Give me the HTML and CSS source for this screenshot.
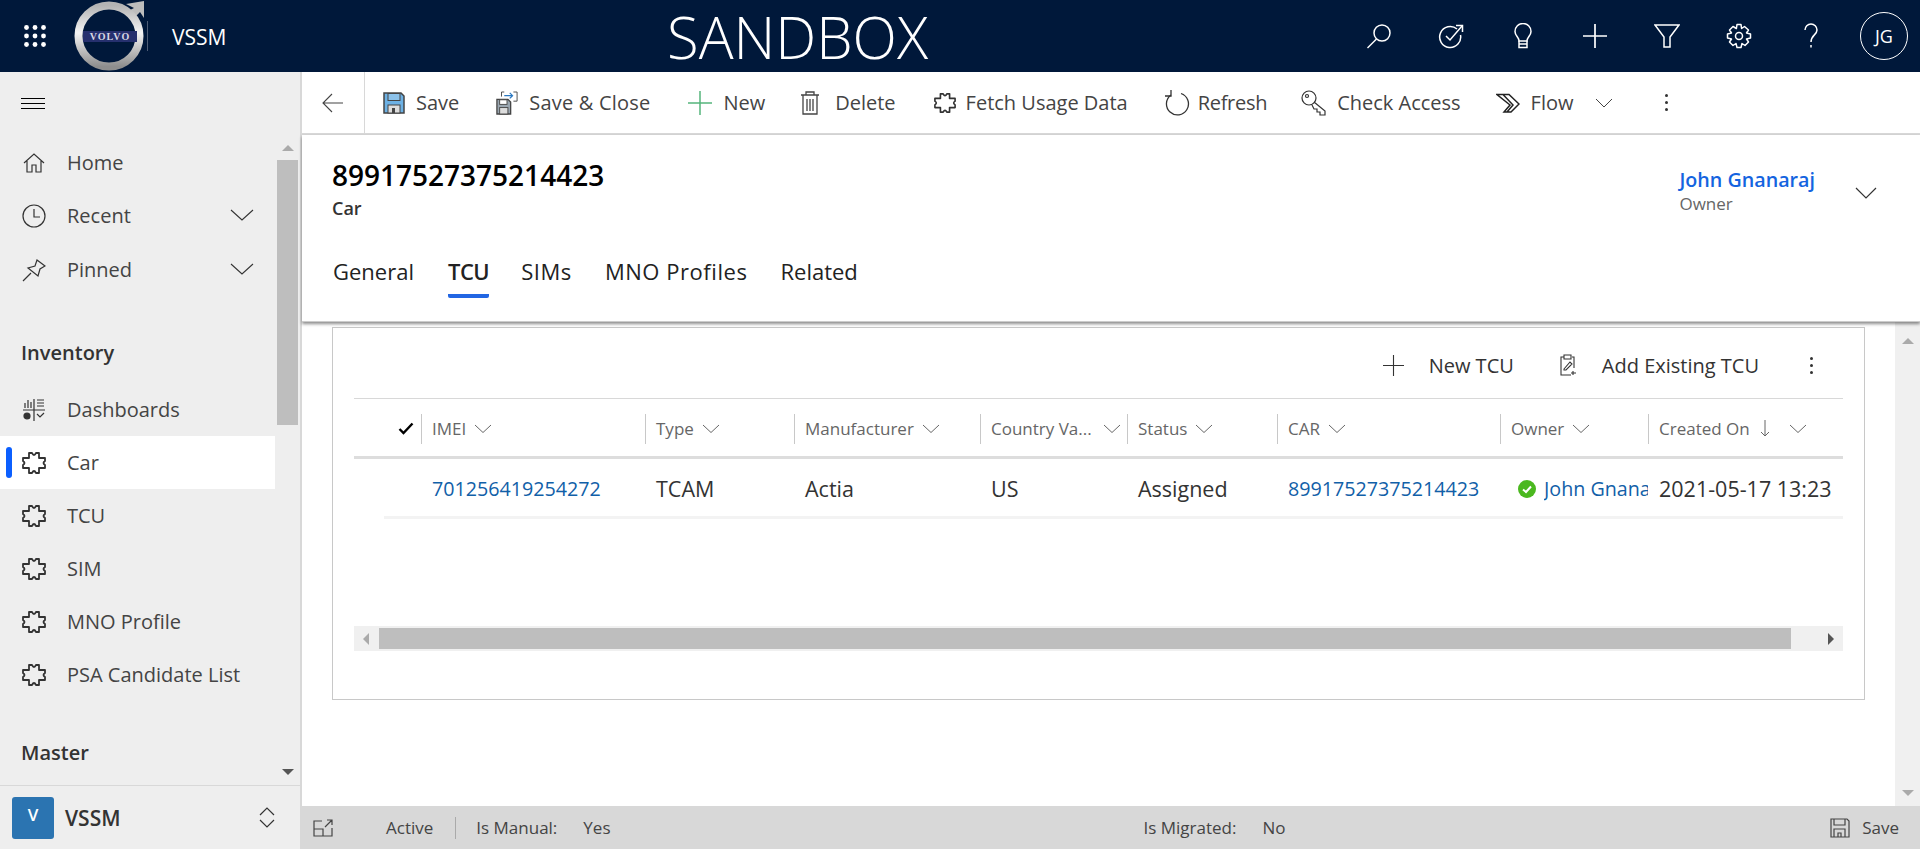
FILE: index.html
```html
<!DOCTYPE html>
<html>
<head>
  <title>VSSM - Car</title>
  <link rel="stylesheet" href="styles.css">
</head>
<body>
  <header class="topbar">
    <svg class="waffle" width="22" height="22" viewBox="0 0 22 22" fill="#fff"><circle cx="2.500" cy="2.500" r="2.400"/><circle cx="11" cy="2.500" r="2.400"/><circle cx="19.500" cy="2.500" r="2.400"/><circle cx="2.500" cy="11" r="2.400"/><circle cx="11" cy="11" r="2.400"/><circle cx="19.500" cy="11" r="2.400"/><circle cx="2.500" cy="19.500" r="2.400"/><circle cx="11" cy="19.500" r="2.400"/><circle cx="19.500" cy="19.500" r="2.400"/></svg>
    <div class="logo">
      <svg width="72" height="72" viewBox="0 0 72 72">
        <defs>
          <linearGradient id="chrome" x1="0" y1="0" x2="0" y2="1"><stop offset="0" stop-color="#b4b4b4"/><stop offset="0.45" stop-color="#f4f4f4"/><stop offset="1" stop-color="#8e8e8e"/></linearGradient>
        </defs>
        <path d="M52 4 L70 1 L70 18 L66 12 L60 18 L54 11 L60 8 Z" fill="#bdbdbd"/>
        <circle cx="35" cy="36" r="30.500" fill="#00183a" stroke="url(#chrome)" stroke-width="8"/>
        <rect x="9" y="31" width="54" height="11" fill="#26306e"/>
      </svg>
      <span class="logo-word">VOLVO</span>
    </div>
    <div class="app-name">VSSM</div>
    <div class="sandbox">SANDBOX</div>
    <div class="top-icons">
      <svg width="26" height="26" viewBox="0 0 26 26" fill="none" stroke="#fff" stroke-width="1.500"><circle cx="16" cy="10" r="8"/><path d="M10.500 16 L1.500 25"/></svg>
      <svg width="26" height="26" viewBox="0 0 26 26" fill="none" stroke="#fff" stroke-width="1.500"><path d="M19 6 A10.500 10.500 0 1 0 22.500 12"/><path d="M8 13 L12 17 L24 3"/><path d="M18 2.500 H24.500 V9"/></svg>
      <svg width="26" height="26" viewBox="0 0 26 26" fill="none" stroke="#fff" stroke-width="1.500"><path d="M9 18 C9 14 5 13 5 8.500 A8 8 0 0 1 21 8.500 C21 13 17 14 17 18 Z"/><path d="M9 18 V24.500 H17 V18 M9 21 H17"/></svg>
      <svg width="26" height="26" viewBox="0 0 26 26" fill="none" stroke="#fff" stroke-width="1.700"><path d="M13 1 V25 M1 13 H25"/></svg>
      <svg width="26" height="26" viewBox="0 0 26 26" fill="none" stroke="#fff" stroke-width="1.500"><path d="M1 2 H25 L16 14 V24 H10 V14 Z"/></svg>
      <svg width="26" height="26" viewBox="0 0 26 26" fill="none" stroke="#fff" stroke-width="1.500"><circle cx="13" cy="13" r="3.500"/><path d="M11 1.500 H15 L15.600 5.500 L18.500 3.500 L22.500 7 L20.500 10 L24.500 11 V15 L20.500 16 L22.500 19 L19 22.500 L16 20.500 L15 24.500 H11 L10 20.500 L7 22.500 L3.500 19 L5.500 16 L1.500 15 V11 L5.500 10 L3.500 7 L7 3.500 L10.400 5.500 Z" stroke-linejoin="round"/></svg>
      <svg width="26" height="26" viewBox="0 0 26 26" fill="none" stroke="#fff" stroke-width="1.500"><path d="M7 7 A6 6 0 0 1 19 7 C19 12 13 12 13 19"/><path d="M13 22 V24.500"/></svg>
      <div class="avatar">JG</div>
    </div>
  </header>

  <div class="main">
    <nav class="sidebar">
      <div class="side-scroll">
        <div class="side-list">
          <div class="burger"><span></span><span></span><span></span></div>
          <div class="side-item"><svg class="side-icon" width="24" height="24" viewBox="0 0 24 24" fill="none" stroke="#333" stroke-width="1.200"><path d="M2 12 L12 3 L22 12 M5 10 V21 H10 V14 H14 V21 H19 V10"/></svg>Home</div>
          <div class="side-item"><svg class="side-icon" width="24" height="24" viewBox="0 0 24 24" fill="none" stroke="#333" stroke-width="1.200"><circle cx="12" cy="12" r="11"/><path d="M12 5 V13 H18"/></svg>Recent<svg class="side-chevron" width="24" height="12" viewBox="0 0 24 12" fill="none" stroke="#333" stroke-width="1.100"><path d="M1 1 L12 11 L23 1"/></svg></div>
          <div class="side-item side-pinned"><svg class="side-icon" width="24" height="24" viewBox="0 0 24 24" fill="none" stroke="#333" stroke-width="1.200"><path d="M1 23 L9 15 M15 2 L23 8 L18 11 L16 18 L6 10 L13 8 Z"/></svg>Pinned<svg class="side-chevron" width="24" height="12" viewBox="0 0 24 12" fill="none" stroke="#333" stroke-width="1.100"><path d="M1 1 L12 11 L23 1"/></svg></div>
          <div class="side-heading side-heading-first">Inventory</div>
          <div class="side-item"><svg class="side-icon" width="24" height="24" viewBox="0 0 24 24" fill="none" stroke="#333" stroke-width="1.200"><path d="M1 12 H23 M12 1 V23 M3 10 V5 M6 10 V2 M9 10 V4 M15 2 H22 M15 5 H22 M15 8 H22 M15 16 L18 19 L22 15"/><circle cx="5" cy="18" r="3" fill="#333"/></svg>Dashboards</div>
          <div class="side-item side-active"><svg class="side-icon" width="24" height="24" viewBox="0 0 24 24"><use href="#puzzle"/></svg>Car</div>
          <div class="side-item"><svg class="side-icon" width="24" height="24" viewBox="0 0 24 24"><use href="#puzzle"/></svg>TCU</div>
          <div class="side-item"><svg class="side-icon" width="24" height="24" viewBox="0 0 24 24"><use href="#puzzle"/></svg>SIM</div>
          <div class="side-item"><svg class="side-icon" width="24" height="24" viewBox="0 0 24 24"><use href="#puzzle"/></svg>MNO Profile</div>
          <div class="side-item"><svg class="side-icon" width="24" height="24" viewBox="0 0 24 24"><use href="#puzzle"/></svg>PSA Candidate List</div>
          <div class="side-heading side-heading-last">Master</div>
        </div>
        <div class="side-bar">
          <span class="arrow-up"></span>
          <div class="side-thumb"></div>
          <span class="arrow-down"></span>
        </div>
      </div>
      <div class="area-switch">
        <div class="area-badge">V</div>
        <div class="area-name">VSSM</div>
        <svg width="16" height="21" viewBox="0 0 16 21" fill="none" stroke="#333" stroke-width="1.200"><path d="M1 8 L8 1 L15 8 M1 13 L8 20 L15 13"/></svg>
      </div>
    </nav>

    <div class="content">
      <div class="commandbar">
        <div class="back"><svg width="22" height="20" viewBox="0 0 22 20" fill="none" stroke="#444" stroke-width="1.100"><path d="M21 10 H1 M10 1 L1 10 L10 19"/></svg></div>
        <div class="cmd cmd-save">
          <svg width="22" height="22" viewBox="0 0 22 22"><path d="M1 1 H18 L21 4 V21 H1 Z" fill="#6db1e4" stroke="#444" stroke-width="1.500"/><rect x="5" y="1.500" width="12" height="7" fill="#8cc2ea" stroke="#444"/><rect x="5" y="13" width="12" height="8" fill="#ddd" stroke="#444"/><rect x="9" y="16" width="3" height="5" fill="#444"/></svg>
          Save
        </div>
        <div class="cmd cmd-close">
          <svg width="22" height="24" viewBox="0 0 24 26"><path d="M1 9 H13 L16 12 V25 H1 Z" fill="#9aa6b0" stroke="#444" stroke-width="1.400"/><rect x="4" y="9.500" width="8" height="5" fill="#fff" stroke="#444"/><rect x="4" y="18" width="9" height="7" fill="#ddd" stroke="#444"/><path d="M6 6 V1 H9 M19 1 H23 V11 H19" fill="none" stroke="#444"/><path d="M9 5 H18 M15 2 L18 5 L15 8" fill="none" stroke="#2b79c2" stroke-width="1.400"/></svg>
          Save &amp; Close
        </div>
        <div class="cmd cmd-new">
          <svg width="24" height="24" viewBox="0 0 24 24" fill="none" stroke="#55b57c" stroke-width="1.500"><path d="M12 0 V24 M0 12 H24"/></svg>
          New
        </div>
        <div class="cmd cmd-delete">
          <svg width="20" height="24" viewBox="0 0 18 24" fill="none" stroke="#444" stroke-width="1.300"><path d="M0 4 H18 M5 4 V1 H13 V4 M2 4 V23 H16 V4 M6 8 V20 M9 8 V20 M12 8 V20"/></svg>
          Delete
        </div>
        <div class="cmd cmd-fetch">
          <svg width="22" height="22" viewBox="0 0 24 24"><use href="#puzzle"/></svg>
          Fetch Usage Data
        </div>
        <div class="cmd cmd-refresh">
          <svg width="26" height="26" viewBox="0 0 26 26" fill="none" stroke="#333" stroke-width="1.300"><path d="M7 5 A11 11 0 1 0 17 3.500"/><path d="M7 0 V6 H1"/></svg>
          Refresh
        </div>
        <div class="cmd cmd-access">
          <svg width="26" height="26" viewBox="0 0 26 26" fill="none" stroke="#333" stroke-width="1.200"><circle cx="8" cy="8" r="7"/><circle cx="6" cy="6" r="1.500"/><path d="M13 12 L24 21 V25 H19 V22 H16 V19 H13 L11 15"/></svg>
          Check Access
        </div>
        <div class="cmd cmd-flow">
          <svg width="24" height="20" viewBox="0 0 24 20" fill="none" stroke="#222" stroke-width="1.500"><path d="M1 1.500 H13 L23 11 L15 19 H8 L14 12 Z M7 1.500 L17 12 L11 19"/></svg>
          Flow
          <svg class="flow-chevron" width="18" height="10" viewBox="0 0 18 10" fill="none" stroke="#444" stroke-width="1"><path d="M1 1 L9 9 L17 1"/></svg>
        </div>
        <div class="kebab"><span></span><span></span><span></span></div>
      </div>

      <div class="form-head">
        <div class="title-row">
          <div>
            <h1 class="record-title">89917527375214423</h1>
            <div class="record-type">Car</div>
          </div>
          <div class="owner-box">
            <div>
              <div class="owner-name">John Gnanaraj</div>
              <div class="owner-label">Owner</div>
            </div>
            <svg width="22" height="12" viewBox="0 0 22 12" fill="none" stroke="#333" stroke-width="1.200"><path d="M1 1 L11 11 L21 1"/></svg>
          </div>
        </div>
        <div class="tabs">
          <div class="tab">General</div>
          <div class="tab tab-on">TCU</div>
          <div class="tab tab-wide">SIMs</div>
          <div class="tab tab-wide">MNO Profiles</div>
          <div class="tab">Related</div>
        </div>
      </div>

      <div class="form-body">
        <div class="form-scroll">
          <section class="grid-card">
            <div class="grid-tools">
              <div class="grid-tool">
                <svg width="21" height="21" viewBox="0 0 21 21" fill="none" stroke="#333" stroke-width="1.100"><path d="M10.500 0 V21 M0 10.500 H21"/></svg>
                New TCU
              </div>
              <div class="grid-tool">
                <svg width="18" height="22" viewBox="0 0 18 22" fill="none" stroke="#333" stroke-width="1.100"><path d="M5 3 H2 V21 H12 M13 3 H15 V14 M5 1 H12 V5 H5 Z M5 15 L11 8 L13 10 L7 16 L5 16 Z M14 17 V21 M12 19 H17"/></svg>
                Add Existing TCU
              </div>
              <div class="kebab kebab-small"><span></span><span></span><span></span></div>
            </div>
            <div class="grid">
              <div class="grid-row grid-header">
                <div class="cell cell-check"><svg width="16" height="13" viewBox="0 0 16 13" fill="none" stroke="#000" stroke-width="2.400"><path d="M1.500 7 L5.500 11 L14.500 1.500"/></svg></div>
                <div class="cell cell-imei">IMEI<svg class="col-chevron" width="18" height="9" viewBox="0 0 18 9"><path d="M1 1 L9 8.500 L17 1"/></svg></div>
                <div class="cell cell-type">Type<svg class="col-chevron" width="18" height="9" viewBox="0 0 18 9"><path d="M1 1 L9 8.500 L17 1"/></svg></div>
                <div class="cell cell-maker">Manufacturer<svg class="col-chevron" width="18" height="9" viewBox="0 0 18 9"><path d="M1 1 L9 8.500 L17 1"/></svg></div>
                <div class="cell cell-country">Country Va...<svg class="col-chevron col-chevron-end" width="18" height="9" viewBox="0 0 18 9"><path d="M1 1 L9 8.500 L17 1"/></svg></div>
                <div class="cell cell-status">Status<svg class="col-chevron" width="18" height="9" viewBox="0 0 18 9"><path d="M1 1 L9 8.500 L17 1"/></svg></div>
                <div class="cell cell-car">CAR<svg class="col-chevron" width="18" height="9" viewBox="0 0 18 9"><path d="M1 1 L9 8.500 L17 1"/></svg></div>
                <div class="cell cell-owner">Owner<svg class="col-chevron" width="18" height="9" viewBox="0 0 18 9"><path d="M1 1 L9 8.500 L17 1"/></svg></div>
                <div class="cell cell-created">Created On<svg class="col-arrow" width="10" height="17" viewBox="0 0 10 17"><path d="M5 0 V16 M1 12 L5 16 L9 12"/></svg><svg class="col-chevron col-chevron-end" width="18" height="9" viewBox="0 0 18 9"><path d="M1 1 L9 8.500 L17 1"/></svg></div>
              </div>
              <div class="grid-row grid-data">
                <div class="cell cell-check"></div>
                <div class="cell cell-imei"><span class="link">701256419254272</span></div>
                <div class="cell cell-type">TCAM</div>
                <div class="cell cell-maker">Actia</div>
                <div class="cell cell-country">US</div>
                <div class="cell cell-status">Assigned</div>
                <div class="cell cell-car"><span class="link">89917527375214423</span></div>
                <div class="cell cell-owner cell-clip">
                  <svg class="presence" width="18" height="18" viewBox="0 0 18 18"><circle cx="9" cy="9" r="9" fill="#4bb81f"/><path d="M5 9.500 L8 12 L13 6.500" fill="none" stroke="#fff" stroke-width="2"/></svg>
                  <span class="link link-clip">John Gnanaraj</span>
                </div>
                <div class="cell cell-created">2021-05-17 13:23</div>
              </div>
            </div>
            <div class="h-scroll">
              <span class="arrow-left"></span>
              <div class="h-thumb"></div>
              <span class="arrow-right"></span>
            </div>
          </section>
        </div>
        <div class="form-bar">
          <span class="arrow-up arrow-light"></span>
          <span class="arrow-down arrow-light"></span>
        </div>
      </div>

      <footer class="statusbar">
        <svg class="status-open" width="20" height="18" viewBox="0 0 20 18" fill="none" stroke="#444" stroke-width="1.200"><path d="M9 2 H1 V17 H19 V9 M1 10 H10 V17 M12 8 L19 1 M14 1 H19 V6"/></svg>
        <span class="status-state">Active</span>
        <span class="status-label">Is Manual:</span>
        <span class="status-value">Yes</span>
        <span class="status-label status-migrated">Is Migrated:</span>
        <span class="status-value">No</span>
        <span class="status-save">
          <svg width="20" height="20" viewBox="0 0 20 20" fill="none" stroke="#444" stroke-width="1.200"><path d="M1 1 H17 L19 3 V19 H1 Z M4 1 V7 H15 V1 M4 19 V11 H15 V19 M8 19 V15 H11 V19"/></svg>
          Save
        </span>
      </footer>
    </div>
  </div>

  <svg class="defs" width="0" height="0">
    <symbol id="puzzle" viewBox="0 0 24 24">
      <path d="M7 2 H10 Q12 6 14 2 H17 V7 H23 V10 Q20 12 23 14 V17 H17 V22 H14 Q12 18 10 22 H7 V17 H1 V14 Q4 12 1 10 V7 H7 Z" fill="none" stroke="#333" stroke-width="1.800" stroke-linejoin="round"/>
    </symbol>
  </svg>
</body>
</html>
```

FILE: styles.css
```css
* {
  box-sizing: border-box;
}

html, body {
  height: 100%;
}

body {
  margin: 0;
  font-family: "Open Sans", "Noto Sans", sans-serif;
  color: #333;
  overflow: hidden;
  background-color: #fff;
}

.defs {
  position: absolute;
}

/* top bar */
.topbar {
  height: 72px;
  background-color: #00183a;
  color: #fff;
  display: flex;
  align-items: center;
  position: relative;
}

.waffle {
  margin-left: 24px;
  margin-top: -1px;
}

.logo {
  width: 72px;
  height: 72px;
  margin-left: 28px;
  position: relative;
  flex: none;
}

.logo-word {
  position: absolute;
  left: 9px;
  top: 31px;
  width: 54px;
  text-align: center;
  font: bold 10px/11px "Liberation Serif", serif;
  letter-spacing: 1px;
  color: #d8d8e4;
}

.app-name {
  margin-left: 1px;
  padding-left: 24px;
  border-left: 1px solid #4d5c75;
  height: 30px;
  font-size: 21px;
  line-height: 32px;
}

.sandbox {
  position: absolute;
  left: 667px;
  top: 0;
  font-weight: 300;
  font-size: 58px;
  line-height: 73px;
}

.top-icons {
  margin-left: auto;
  display: flex;
  align-items: center;
  gap: 46px;
  padding-right: 12px;
}

.avatar {
  width: 48px;
  height: 48px;
  margin-left: -10px;
  border: 1px solid #fff;
  border-radius: 50%;
  display: flex;
  align-items: center;
  justify-content: center;
  font-size: 18px;
}

/* layout */
.main {
  height: 777px;
  display: flex;
}

/* sidebar */
.sidebar {
  width: 302px;
  background-color: #eeeeee;
  border-right: 2px solid #d8d8d8;
  display: flex;
  flex-direction: column;
  flex: none;
}

.side-scroll {
  height: 713px;
  display: flex;
}

.side-list {
  width: 275px;
  flex: none;
}

.burger {
  height: 64px;
  padding: 26px 0 0 21px;
}

.burger span {
  display: block;
  width: 24px;
  height: 1px;
  background-color: #000;
  margin-bottom: 4px;
}

.side-item {
  height: 53px;
  display: flex;
  align-items: center;
  font-size: 20px;
  color: #444;
  position: relative;
  padding-left: 22px;
}

.side-pinned {
  margin-top: 1px;
}

.side-icon {
  margin-right: 21px;
  flex: none;
}

.side-chevron {
  position: absolute;
  left: 230px;
  top: 20px;
}

.side-active {
  background-color: #fff;
}

.side-active::before {
  content: "";
  position: absolute;
  left: 6px;
  top: 11px;
  width: 6px;
  height: 31px;
  border-radius: 3px;
  background-color: #0b5fff;
}

.side-heading {
  font-size: 20px;
  font-weight: 600;
  color: #333;
  padding-left: 21px;
}

.side-heading-first {
  margin-top: 42px;
  height: 45px;
  line-height: 30px;
}

.side-heading-last {
  margin-top: 38px;
}

.side-bar {
  width: 25px;
  position: relative;
}

.side-thumb {
  position: absolute;
  left: 2px;
  top: 88px;
  width: 21px;
  height: 265px;
  background-color: #bebebe;
}

.side-bar .arrow-up {
  position: absolute;
  left: 7px;
  top: 73px;
}

.side-bar .arrow-down {
  position: absolute;
  left: 7px;
  bottom: 10px;
  border-top-color: #555;
}

.arrow-up {
  display: block;
  width: 0;
  height: 0;
  border-left: 6px solid transparent;
  border-right: 6px solid transparent;
  border-bottom: 6px solid #aaa;
}

.arrow-down {
  display: block;
  width: 0;
  height: 0;
  border-left: 6px solid transparent;
  border-right: 6px solid transparent;
  border-top: 6px solid #aaa;
}

.area-switch {
  height: 64px;
  border-top: 1px solid #d8d8d8;
  display: flex;
  align-items: center;
  padding: 0 25px 0 12px;
}

.area-badge {
  width: 42px;
  height: 42px;
  border-radius: 3px;
  background-color: #2b74b1;
  color: #fff;
  font-size: 17px;
  font-weight: 600;
  text-align: center;
  line-height: 36px;
}

.area-name {
  margin-left: 11px;
  font-size: 21px;
  font-weight: 600;
  flex: 1;
}

/* main content */
.content {
  flex: 1;
  display: flex;
  flex-direction: column;
  min-width: 0;
}

.commandbar {
  height: 63px;
  border-bottom: 2px solid #d8d8d8;
  display: flex;
  align-items: center;
  font-size: 20px;
  color: #444;
}

.back {
  width: 63px;
  height: 61px;
  border-right: 1px solid #d8d8d8;
  display: flex;
  align-items: center;
  justify-content: center;
  margin-right: 18px;
}

.cmd {
  display: flex;
  align-items: center;
  gap: 11px;
  margin-right: 36px;
  white-space: nowrap;
}

.cmd-save { margin-right: 37px; }
.cmd-close { margin-right: 38px; letter-spacing: 0.2px; }
.cmd-new { margin-right: 35px; }
.cmd-delete { margin-right: 38px; gap: 15px; }
.cmd-fetch { gap: 10px; }
.cmd-refresh { margin-right: 34px; gap: 8px; letter-spacing: -0.3px; }
.cmd-access { margin-right: 35px; gap: 10px; }
.cmd-flow { margin-right: 52px; }

.flow-chevron {
  margin-left: 10px;
}

.kebab span {
  display: block;
  width: 3px;
  height: 3px;
  border-radius: 50%;
  background-color: #333;
  margin: 4px 0;
}

.form-head {
  height: 187px;
  padding: 21px 30px 0 30px;
  position: relative;
  box-shadow: 0 2px 3px rgba(0, 0, 0, 0.45);
  z-index: 1;
  border-bottom: 1px solid #ccc;
}

.title-row {
  display: flex;
  justify-content: space-between;
  height: 85px;
}

.record-title {
  margin: 0;
  font-size: 28px;
  font-weight: 600;
  color: #000;
  line-height: 38px;
}

.record-type {
  margin-top: 2px;
  font-size: 18px;
  font-weight: 600;
  line-height: 24px;
}

.owner-box {
  display: flex;
  align-items: flex-start;
  gap: 40px;
  margin-right: 13px;
}

.owner-name {
  font-size: 19.700px;
  font-weight: 600;
  color: #1464e0;
  line-height: 28px;
  margin-top: 10px;
}

.owner-label {
  font-size: 17px;
  color: #666;
  line-height: 22px;
  margin-top: -1px;
}

.owner-box svg {
  margin-top: 31px;
}

.tabs {
  display: flex;
  gap: 33px;
  margin-left: 1px;
  margin-top: 9px;
}

.tab {
  font-size: 22px;
  line-height: 42px;
  height: 48px;
  color: #222;
}

.tab-on {
  font-weight: 600;
  border-bottom: 4px solid #2266e3;
  border-radius: 0 0 2px 2px;
  letter-spacing: -0.5px;
  margin-left: 1px;
  margin-right: -1px;
}

.tab-wide {
  letter-spacing: 0.55px;
}

.form-body {
  flex: 1;
  display: flex;
  min-height: 0;
}

.form-scroll {
  flex: 1;
  padding: 5px 30px 0 30px;
}

.form-bar {
  width: 25px;
  background-color: #f0f0f0;
  position: relative;
}

.form-bar .arrow-up {
  position: absolute;
  left: 7px;
  top: 16px;
}

.form-bar .arrow-down {
  position: absolute;
  left: 7px;
  bottom: 10px;
}

/* sub grid */
.grid-card {
  height: 373px;
  border: 1px solid #c8c8c8;
  padding: 0 21px;
}

.grid-tools {
  height: 71px;
  display: flex;
  align-items: center;
  justify-content: flex-end;
  gap: 45px;
  font-size: 20px;
  border-bottom: 1px solid #d8d8d8;
  padding: 4px 30px 0 0;
}

.grid-tool {
  display: flex;
  align-items: center;
  gap: 25px;
}

.kebab-small {
  margin-left: 6px;
}

.grid-row {
  display: flex;
}

.grid-header {
  height: 60px;
  border-bottom: 3px solid #dddddd;
  padding-top: 2px;
  font-size: 17px;
  color: #666;
  align-items: center;
}

.grid-header .cell {
  border-left: 1px solid #c8c8c8;
  height: 30px;
  display: flex;
  align-items: center;
  padding-left: 10px;
  white-space: nowrap;
}

.grid-header .cell-check {
  border-left: 0;
  justify-content: flex-end;
  padding-right: 7px;
}

.cell-check { width: 67px; }
.cell-imei { width: 224px; }
.cell-type { width: 149px; }
.cell-maker { width: 186px; }
.cell-country { width: 147px; }
.cell-status { width: 150px; }
.cell-car { width: 223px; }
.cell-owner { width: 148px; }
.cell-created { flex: 1; min-width: 0; }

.col-chevron {
  margin-left: 8px;
  fill: none;
  stroke: #666;
  stroke-width: 1;
}

.col-chevron-end {
  margin-left: auto;
  margin-right: 6px;
}

.cell-created .col-chevron-end {
  margin-left: 19px;
}

.col-arrow {
  margin-left: 10px;
  fill: none;
  stroke: #666;
  stroke-width: 1;
}

.grid-data {
  height: 60px;
  margin-left: 30px;
  padding-top: 2px;
  border-bottom: 3px solid #f3f3f3;
  font-size: 21.500px;
  align-items: center;
  line-height: 28px;
  white-space: nowrap;
}

.grid-data .cell-check {
  width: 37px;
}

.grid-data .cell {
  padding-left: 11px;
}

.grid-data .cell-owner {
  padding-left: 18px;
}

.grid-data .cell-created {
  padding-left: 11px;
}

.cell-clip {
  display: flex;
  align-items: center;
  gap: 8px;
}

.presence {
  flex: none;
}

.link {
  color: #1160a8;
  font-size: 19.700px;
}

.link-clip {
  min-width: 0;
  overflow: hidden;
}

.h-scroll {
  margin-top: 107px;
  height: 25px;
  background-color: #f0f0f0;
  display: flex;
  align-items: center;
  position: relative;
}

.h-thumb {
  position: absolute;
  left: 25px;
  right: 52px;
  top: 2px;
  height: 21px;
  background-color: #bebebe;
}

.arrow-left {
  width: 0;
  height: 0;
  margin-left: 9px;
  border-top: 6px solid transparent;
  border-bottom: 6px solid transparent;
  border-right: 6px solid #aaa;
}

.arrow-right {
  width: 0;
  height: 0;
  margin-left: auto;
  margin-right: 9px;
  border-top: 6px solid transparent;
  border-bottom: 6px solid transparent;
  border-left: 6px solid #555;
}

/* status bar */
.statusbar {
  height: 43px;
  background-color: #d8d8d8;
  display: flex;
  align-items: center;
  font-size: 17px;
  color: #444;
}

.status-open {
  margin-left: 11px;
}

.status-state {
  margin-left: 53px;
  padding-right: 22px;
  border-right: 1px solid #aaa;
  line-height: 22px;
}

.status-label {
  margin-left: 20px;
}

.status-value {
  margin-left: 26px;
}

.status-migrated {
  margin-left: 533px;
}

.status-save {
  margin-left: auto;
  margin-right: 21px;
  display: flex;
  align-items: center;
  gap: 12px;
}
```
